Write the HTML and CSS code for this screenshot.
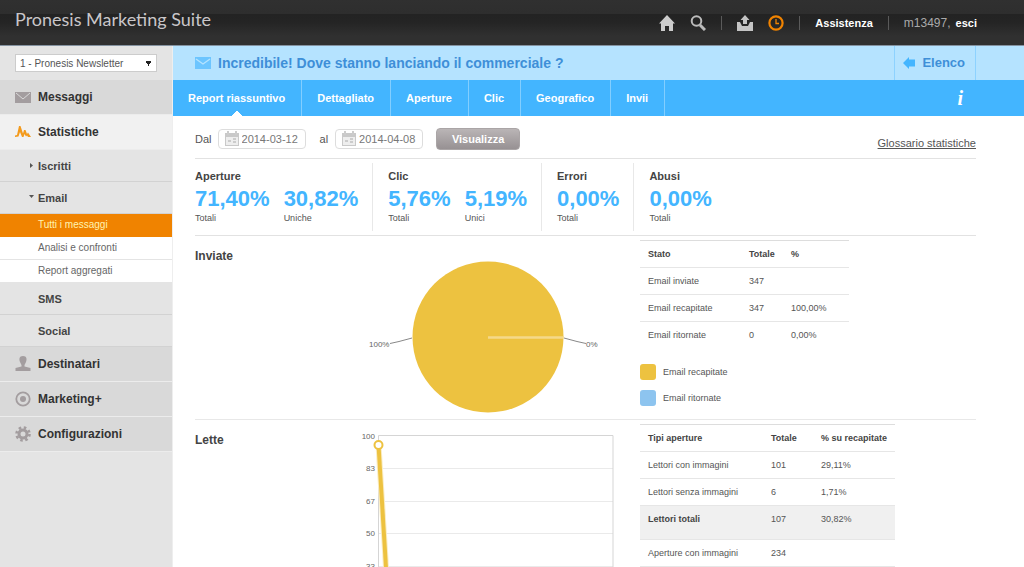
FILE: index.html
```html
<!DOCTYPE html>
<html lang="it">
<head>
<meta charset="utf-8">
<meta name="viewport" content="width=device-width, initial-scale=1">
<title>Pronesis Marketing Suite</title>
<link rel="stylesheet" href="styles.css">
</head>
<body>
<header class="topbar">
  <h1 class="brand">Pronesis Marketing Suite</h1>
  <div class="tools">
    <a class="tool" href="#" aria-label="Home"><svg class="icon" viewBox="0 0 16 16"><path fill="#ccc" d="M8 0 16 8.500h-2V16h-4v-5H6v5H2V8.500H0z"/></svg></a>
    <a class="tool" href="#" aria-label="Cerca"><svg class="icon" viewBox="0 0 16 16"><circle cx="6.500" cy="6" r="4.800" fill="none" stroke="#bbb" stroke-width="2"/><path d="m10 10 5 5" stroke="#bbb" stroke-width="3"/></svg></a>
    <span class="divider"></span>
    <a class="tool" href="#" aria-label="Importa"><svg class="icon" viewBox="0 0 16 16"><path fill="#c4c4c4" d="M8 0l4.500 5H10v4H6V5H3.500zM0 7h3l2 4h6l2-4h3v9H0z"/></svg></a>
    <a class="tool" href="#" aria-label="Attività"><svg class="icon" viewBox="0 0 16 16"><circle cx="8" cy="8" r="6.600" fill="none" stroke="#f08300" stroke-width="2.200"/><path d="M8 4v4.500h3" fill="none" stroke="#f08300" stroke-width="1.300"/></svg></a>
    <span class="divider"></span>
    <a class="toplink" href="#">Assistenza</a>
    <span class="divider"></span>
    <span class="user"><span class="user-id">m13497,</span> <a class="toplink" href="#">esci</a></span>
  </div>
</header>
<div class="layout">
  <aside class="sidebar">
    <div class="account">
      <select class="account-select" aria-label="Newsletter"><option>1 - Pronesis Newsletter</option></select>
    </div>
    <nav class="menu">
      <a class="menu-item" href="#"><svg class="icon" viewBox="0 0 16 16"><path fill="#a39d9f" d="M0 3h16v11H0z"/><path d="m1 4 7 6 7-6" fill="none" stroke="#d9d9d9"/></svg>Messaggi</a>
      <a class="menu-item menu-open" href="#"><svg class="icon" viewBox="0 0 16 16"><path fill="#f39a1c" d="M0 11.500l2-.5L4 2h1.500L8 9.500 9 6h1.500l1.500 4 1-1.500L16 13h-3l-1-1.500-1 1L9.500 10l-1 3H7L5 8l-1.500 4.500L0 13z"/></svg>Statistiche</a>
      <a class="sub-item" href="#"><svg class="arrow" viewBox="0 0 5 5"><path fill="#555" d="M1 0l3 2.500L1 5z"/></svg>Iscritti</a>
      <a class="sub-item" href="#"><svg class="arrow" viewBox="0 0 5 5"><path fill="#555" d="M0 0h5L2.500 3z"/></svg>Email</a>
      <a class="leaf leaf-active" href="#">Tutti i messaggi</a>
      <a class="leaf" href="#">Analisi e confronti</a>
      <a class="leaf" href="#">Report aggregati</a>
      <a class="sub-item" href="#"><span class="arrow"></span>SMS</a>
      <a class="sub-item" href="#"><span class="arrow"></span>Social</a>
      <a class="menu-item" href="#"><svg class="icon" viewBox="0 0 16 16"><path fill="#a39d9f" d="M8 0c4 0 4 3.500 3 6L9.500 9v1.500l6 1.500v3H.5v-3l6-1.500V9L5 6C4 3.500 4 0 8 0z"/></svg>Destinatari</a>
      <a class="menu-item" href="#"><svg class="icon" viewBox="0 0 16 16"><circle cx="8" cy="8" r="6.700" fill="none" stroke="#a39d9f" stroke-width="1.800"/><circle cx="8" cy="8" r="3" fill="#a39d9f"/></svg>Marketing+</a>
      <a class="menu-item" href="#"><svg class="icon" viewBox="0 0 16 16"><circle cx="8" cy="8" r="4" fill="none" stroke="#a39d9f" stroke-width="3"/><circle cx="8" cy="8" r="6.500" fill="none" stroke="#a39d9f" stroke-width="2.600" stroke-dasharray="2.550 2.555"/></svg>Configurazioni</a>
    </nav>
  </aside>
  <main class="main">
    <div class="titlebar">
      <svg class="icon" viewBox="0 0 16 16"><path fill="#6cc5ff" d="M0 2h16v12H0z"/><path d="m1 4 7 5 7-5" fill="none" stroke="#b5e3ff" stroke-width="1.400"/></svg>
      <h2 class="title">Incredibile! Dove stanno lanciando il commerciale ?</h2>
      <a class="back" href="#"><svg class="back-icon" viewBox="0 0 12 12"><path fill="#43b5ff" d="M0 6l6-6v2.500h6v7H6V12z"/></svg>Elenco</a>
    </div>
    <nav class="tabs">
      <a class="tab tab-active" href="#">Report riassuntivo</a>
      <a class="tab" href="#">Dettagliato</a>
      <a class="tab" href="#">Aperture</a>
      <a class="tab" href="#">Clic</a>
      <a class="tab" href="#">Geografico</a>
      <a class="tab" href="#">Invii</a>
      <a class="info" href="#" aria-label="Informazioni">i</a>
    </nav>
    <div class="content">
      <form class="filters">
        <label for="from">Dal</label>
        <span class="date"><svg class="icon" viewBox="0 0 16 16"><path fill="#c9c9c9" d="M1 2h14v13H1z"/><path fill="#eee" d="M2 6h12v8H2z"/><path d="M4 0v4M12 0v4M4 10h3M9 8h3M9 11h3" stroke="#ccc" stroke-width="2"/></svg><input class="date-input" id="from" type="text" value="2014-03-12"></span>
        <label class="to-label" for="to">al</label>
        <span class="date"><svg class="icon" viewBox="0 0 16 16"><path fill="#c9c9c9" d="M1 2h14v13H1z"/><path fill="#eee" d="M2 6h12v8H2z"/><path d="M4 0v4M12 0v4M4 10h3M9 8h3M9 11h3" stroke="#ccc" stroke-width="2"/></svg><input class="date-input" id="to" type="text" value="2014-04-08"></span>
        <button class="submit" type="button">Visualizza</button>
        <a class="glossary" href="#">Glossario statistiche</a>
      </form>
      <section class="stats">
        <div class="stat-group"><h3 class="stat-title">Aperture</h3><div class="stat-row">
          <div><div class="value">71,40%</div><div class="caption">Totali</div></div>
          <div><div class="value">30,82%</div><div class="caption">Uniche</div></div></div></div>
        <div class="stat-group"><h3 class="stat-title">Clic</h3><div class="stat-row">
          <div><div class="value">5,76%</div><div class="caption">Totali</div></div>
          <div><div class="value">5,19%</div><div class="caption">Unici</div></div></div></div>
        <div class="stat-group"><h3 class="stat-title">Errori</h3><div class="stat-row">
          <div><div class="value">0,00%</div><div class="caption">Totali</div></div></div></div>
        <div class="stat-group"><h3 class="stat-title">Abusi</h3><div class="stat-row">
          <div><div class="value">0,00%</div><div class="caption">Totali</div></div></div></div>
      </section>
      <section class="panel">
        <h3 class="panel-title">Inviate</h3>
        <svg class="chart" viewBox="0 0 295 183" role="img" aria-label="Email recapitate 100%, Email ritornate 0%">
          <circle cx="143" cy="101" r="75.500" fill="#edc240"/>
          <path d="M143 101.500h75.500" stroke="#f4d98a" stroke-width="2.500"/>
          <path d="M67 102 54 105.500 45 107.500M219 102l13 3.500 9 2" fill="none" stroke="#888"/>
          <text class="chart-text" x="24" y="111">100%</text>
          <text class="chart-text" x="241" y="111">0%</text>
        </svg>
        <div class="side">
          <table class="data">
            <colgroup><col class="col-state"><col class="col-total"><col class="col-pct"></colgroup>
            <thead><tr><th>Stato</th><th>Totale</th><th>%</th></tr></thead>
            <tbody>
              <tr><td>Email inviate</td><td>347</td><td></td></tr>
              <tr><td>Email recapitate</td><td>347</td><td>100,00%</td></tr>
              <tr class="last"><td>Email ritornate</td><td>0</td><td>0,00%</td></tr>
            </tbody>
          </table>
          <ul class="legend">
            <li class="legend-item"><span class="swatch swatch-yellow"></span>Email recapitate</li>
            <li class="legend-item"><span class="swatch swatch-blue"></span>Email ritornate</li>
          </ul>
        </div>
      </section>
      <section class="panel">
        <h3 class="panel-title">Lette</h3>
        <svg class="chart" viewBox="0 0 295 220" role="img" aria-label="Andamento delle letture">
          <path d="M34 48.500h234M34 81.500h234M34 113.500h234M34 146.500h234M34 179.500h234" stroke="#eaeaea"/>
          <path d="M33.500 212V15.500h234.500V212z" fill="none" stroke="#d5d5d5"/>
          <path d="M33.500 25 45 213" fill="none" stroke="#faedc4" stroke-width="6"/>
          <path d="M33.500 25 45 213" fill="none" stroke="#edc240" stroke-width="4"/>
          <circle cx="33.500" cy="25" r="4" fill="#fff" stroke="#edc240" stroke-width="2"/>
          <g class="chart-text" text-anchor="end"><text x="30" y="19">100</text><text x="30" y="51">83</text><text x="30" y="84">67</text><text x="30" y="116">50</text><text x="30" y="149">33</text><text x="30" y="182">17</text><text x="30" y="215">0</text></g>
        </svg>
        <div class="side">
          <table class="data">
            <colgroup><col class="col-type"><col class="col-opens"><col class="col-delivered"></colgroup>
            <thead><tr><th>Tipi aperture</th><th>Totale</th><th>% su recapitate</th></tr></thead>
            <tbody>
              <tr><td>Lettori con immagini</td><td>101</td><td>29,11%</td></tr>
              <tr><td>Lettori senza immagini</td><td>6</td><td>1,71%</td></tr>
              <tr class="total"><th scope="row">Lettori totali</th><td>107</td><td>30,82%</td></tr>
              <tr><td>Aperture con immagini</td><td>234</td><td></td></tr>
            </tbody>
          </table>
        </div>
      </section>
    </div>
  </main>
</div>
</body>
</html>
```
FILE: styles.css
```css
* { box-sizing: border-box; }
html { scrollbar-width: none; }
body {
  margin: 0;
  min-height: 100vh;
  display: flex;
  flex-direction: column;
  background: #fff;
  color: #555;
  font: 11px/16px "Liberation Sans", Arial, sans-serif;
}
a { color: inherit; text-decoration: none; }
h1, h2, h3, ul { margin: 0; padding: 0; }
.icon { width: 16px; height: 16px; flex: none; display: block; }

.topbar {
  height: 46px;
  padding: 0 47px 0 15px;
  display: flex;
  justify-content: space-between;
  background: linear-gradient(#303030 0, #2e2e2e 14px, #232323 14px, #242424 22px, #303030 36px);
  border-bottom: 1px solid #8492a0;
}
.brand { font: 400 18px/38px Lato, sans-serif; color: #c9c6c9; }
.tools { display: flex; align-items: center; gap: 15px; }
.divider { width: 1px; height: 14px; background: #5a5a5a; }
.toplink { color: #fff; font-weight: bold; }
.user { color: #aaa; }
.user-id { padding-right: 2px; font-size: 12px; }

.layout { flex: 1; display: flex; }
.sidebar { width: 172px; flex: none; background: #e4e4e4; }
.account { height: 34px; padding: 8px 15px; }
.account-select {
  display: block;
  width: 100%;
  height: 18px;
  padding: 0 4px;
  border: 1px solid #ccc;
  border-radius: 0;
  appearance: none;
  background: #fff conic-gradient(from -30deg at 50% 100%, #222 60deg, transparent 0) no-repeat right 5px center / 5px 5px;
  color: #555;
  font: 10px "Liberation Sans", Arial, sans-serif;
}
.menu { display: flex; flex-direction: column; }
.menu-item {
  height: 35px;
  padding: 0 15px;
  display: flex;
  align-items: center;
  gap: 7px;
  background: #d9d9d9;
  border-bottom: 1px solid #ececec;
  color: #333;
  font-size: 12px;
  font-weight: bold;
}
.menu-open { background: #f1f1f1; }
.sub-item {
  height: 32px;
  padding: 0 29px;
  display: flex;
  align-items: center;
  gap: 4px;
  border-bottom: 1px solid #d2d2d2;
  color: #444;
  font-weight: bold;
}
.arrow { width: 5px; height: 5px; flex: none; }
.leaf {
  padding: 3px 38px;
  background: #fff;
  border-bottom: 1px solid #e4e4e4;
  color: #666;
  font-size: 10px;
}
.leaf-active { background: #f08300; border-color: #f08300; color: #fff3b0; }

.main { flex: 1; min-width: 0; border-left: 1px solid #eee; }
.titlebar {
  height: 34px;
  padding: 0 48px 0 22px;
  display: flex;
  align-items: center;
  gap: 7px;
  background: #b5e3ff;
  color: #3e8fd8;
}
.title { flex: 1; font-size: 14px; line-height: 20px; }
.back {
  align-self: stretch;
  padding: 0 10px 0 8px;
  display: flex;
  align-items: center;
  gap: 7px;
  border: solid #8dd2ff;
  border-width: 0 1px;
  font-size: 13px;
  font-weight: bold;
}
.back-icon { width: 12px; height: 12px; }
.tabs {
  height: 36px;
  padding-right: 61px;
  display: flex;
  background: #43b5ff;
  color: #fff;
  font-weight: bold;
}
.tab { padding: 0 16px 0 15px; line-height: 36px; border-right: 1px solid #82ceff; }
.tab-active {
  background: conic-gradient(from 135deg at 50% 0, #fff 90deg, transparent 0) no-repeat center bottom / 12px 6px;
}
.info { margin-left: auto; font: italic bold 20px/36px "Liberation Serif", serif; }

.content { padding: 0 48px 0 22px; }
.filters {
  height: 43px;
  padding: 8px 0 4px;
  display: flex;
  align-items: center;
  gap: 6px;
  border-bottom: 1px solid #e2e2e2;
}
.date {
  width: 88px;
  height: 20px;
  padding: 0 5px;
  display: flex;
  align-items: center;
  gap: 2px;
  border: 1px solid #ddd;
  border-radius: 4px;
}
.date-input { width: 100%; min-width: 0; padding: 0; border: 0; color: #777; font: 11px "Liberation Sans", Arial, sans-serif; }
.to-label { padding: 0 1px 0 8px; }
.submit {
  width: 84px;
  height: 22px;
  margin-left: 7px;
  padding: 0;
  border: 1px solid #aaa5a6;
  border-radius: 4px;
  background: linear-gradient(#bab5b6, #979193);
  color: #fff;
  font: bold 11px "Liberation Sans", Arial, sans-serif;
}
.glossary { margin-left: auto; padding-top: 8px; text-decoration: underline; }

.stats { padding: 4px 0; display: flex; border-bottom: 1px solid #e2e2e2; }
.stat-group { height: 68px; padding: 5px 14px 0 15px; border-right: 1px solid #e8e8e8; }
.stat-group:first-child { padding-left: 0; }
.stat-group:last-child { border-right: 0; }
.stat-title { font-size: 11px; color: #444; }
.stat-row { display: flex; gap: 14px; }
.value { color: #43b5ff; font-size: 22px; line-height: 30px; font-weight: bold; }
.caption { font-size: 9px; line-height: 8px; }

.panel {
  display: grid;
  grid-template-columns: 150px minmax(0, 1fr) 336px;
  border-bottom: 1px solid #e8e8e8;
}
.panel-title { padding-top: 12px; font-size: 12px; color: #444; }
.chart { width: 100%; display: block; }
.chart-text { fill: #666; font-size: 8px; }
.side { padding-top: 4px; }
.data { border-collapse: collapse; border-top: 1px solid #ddd; table-layout: fixed; font-size: 9px; line-height: 16px; }
.data th, .data td { padding: 5px 0 5px 8px; text-align: left; vertical-align: top; height: 27px; border-bottom: 1px solid #e6e6e6; }
.data th { color: #444; }
.data .last td { border-bottom: 0; }
.data .total { background: #f0f0f0; }
.data .total th, .data .total td { height: 34px; }
.col-state { width: 101px; }
.col-total { width: 42px; }
.col-pct { width: 66px; }
.col-type { width: 123px; }
.col-opens { width: 50px; }
.col-delivered { width: 82px; }
.legend { padding-top: 15px; display: grid; gap: 10px; list-style: none; font-size: 9px; }
.legend-item { display: flex; align-items: center; gap: 7px; }
.swatch { width: 16px; height: 16px; border-radius: 3px; }
.swatch-yellow { background: #edc240; }
.swatch-blue { background: #8dc4ef; }
```
